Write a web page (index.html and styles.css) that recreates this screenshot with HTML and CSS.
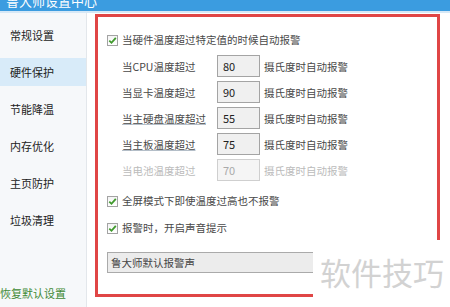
FILE: index.html
```html
<!DOCTYPE html>
<html>
  <head>
    <title>鲁大师设置中心</title>
    <link rel="stylesheet" href="styles.css">
  </head>
  <body>
    <div id="titlebar"><span class="title">鲁大师设置中心</span></div>
    <div id="main">
      <ul id="sidebar">
        <li>常规设置</li>
        <li class="active">硬件保护</li>
        <li>节能降温</li>
        <li>内存优化</li>
        <li>主页防护</li>
        <li>垃圾清理</li>
        <li class="restore">恢复默认设置</li>
      </ul>

      <div id="content">
        <div class="panel">
          <label class="check">
            <span class="box"><svg width="9" height="9" viewBox="0 0 9 9"><path d="M1.3 4.6 L3.5 6.8 L7.8 1.8" fill="none" stroke="#3f9a2c" stroke-width="1.8"/></svg></span>
            当硬件温度超过特定值的时候自动报警
          </label>

          <div class="temps">
            <div class="temp-row">
              <span class="name">当CPU温度超过</span>
              <span class="field">80</span>
              <span class="unit">摄氏度时自动报警</span>
            </div>
            <div class="temp-row">
              <span class="name">当显卡温度超过</span>
              <span class="field">90</span>
              <span class="unit">摄氏度时自动报警</span>
            </div>
            <div class="temp-row">
              <span class="name linked">当主硬盘温度超过</span>
              <span class="field">55</span>
              <span class="unit">摄氏度时自动报警</span>
            </div>
            <div class="temp-row">
              <span class="name linked">当主板温度超过</span>
              <span class="field">75</span>
              <span class="unit">摄氏度时自动报警</span>
            </div>
            <div class="temp-row disabled">
              <span class="name">当电池温度超过</span>
              <span class="field">70</span>
              <span class="unit">摄氏度时自动报警</span>
            </div>
          </div>

          <label class="check fullscreen">
            <span class="box"><svg width="9" height="9" viewBox="0 0 9 9"><path d="M1.3 4.6 L3.5 6.8 L7.8 1.8" fill="none" stroke="#3f9a2c" stroke-width="1.8"/></svg></span>
            全屏模式下即使温度过高也不报警
          </label>
          <label class="check sound">
            <span class="box"><svg width="9" height="9" viewBox="0 0 9 9"><path d="M1.3 4.6 L3.5 6.8 L7.8 1.8" fill="none" stroke="#3f9a2c" stroke-width="1.8"/></svg></span>
            报警时，开启声音提示
          </label>

          <div class="select">鲁大师默认报警声</div>
        </div>
      </div>
    </div>

    <div id="watermark">软件技巧</div>
  </body>
</html>
```

FILE: styles.css
```css
body {
  margin: 0;
  width: 450px;
  height: 307px;
  overflow: hidden;
  position: relative;
  background: #fff;
  font-family: "Noto Sans CJK SC", "Noto Sans", sans-serif;
  color: #333;
}

#titlebar {
  height: 11px;
  background: #3b9ce0;
  border-bottom: 2px solid #d6e8f6;
  overflow: hidden;
}

#titlebar .title {
  display: block;
  margin: -7px 0 0 6px;
  font-size: 13px;
  line-height: 16px;
  color: #fff;
}

#main {
  display: flex;
  height: 294px;
}

#sidebar {
  list-style-type: none;
  margin: 0;
  padding: 8px 0 0 0;
  width: 86px;
  background: #f6f8fa;
  border-right: 1px solid #e3e7eb;
  display: flex;
  flex-direction: column;
}

#sidebar li {
  height: 28px;
  line-height: 28px;
  margin-bottom: 9px;
  padding-left: 10px;
  font-size: 11px;
  color: #222;
}

#sidebar li.active {
  background: #d8ebf9;
}

#sidebar li.restore {
  margin-top: auto;
  margin-bottom: 0;
  height: 20px;
  line-height: 20px;
  padding: 0 0 4px 0;
  color: #3f8a35;
}

#content {
  flex: 1;
  padding: 1px 0 0 8px;
}

.panel {
  box-sizing: border-box;
  width: 345px;
  height: 283px;
  border: 3px solid #e04646;
  padding: 16px 0 0 9px;
  font-size: 10.5px;
  color: #484848;
}

.check {
  display: flex;
  align-items: center;
  gap: 4px;
  height: 14px;
  line-height: 14px;
}

.check .box {
  box-sizing: border-box;
  width: 11px;
  height: 11px;
  border: 1px solid #a3a3a3;
  background: linear-gradient(#f4f4f4, #fff);
  display: flex;
  align-items: center;
  justify-content: center;
}

.temps {
  margin: 8px 0 0 15px;
  display: flex;
  flex-direction: column;
  gap: 4px;
}

.temp-row {
  display: flex;
  align-items: center;
  height: 22px;
}

.temp-row .name {
  width: 95px;
}

.temp-row .linked {
  text-decoration: underline;
  text-decoration-color: #b4bec8;
}

.temp-row .field {
  box-sizing: border-box;
  width: 43px;
  height: 22px;
  line-height: 20px;
  border: 1px solid #a4a4a4;
  background: #f0f0f0;
  padding-left: 5px;
  font-size: 11px;
  color: #222;
}

.temp-row .unit {
  margin-left: 4px;
}

.temp-row.disabled {
  color: #bbb;
}

.temp-row.disabled .field {
  border-color: #cfcfcf;
  background: #f5f5f5;
  color: #aaa;
}

.fullscreen {
  margin-top: 13px;
}

.sound {
  margin-top: 13px;
}

.select {
  box-sizing: border-box;
  margin-top: 17px;
  width: 300px;
  height: 21px;
  line-height: 19px;
  border: 1px solid #aaa;
  background: #ececec;
  padding-left: 3px;
  color: #444;
}

/* watermark pasted over the corner */
#watermark {
  position: absolute;
  left: 313px;
  top: 240px;
  right: 0;
  bottom: 0;
  background: #fff;
  padding: 14px 0 0 7px;
  font-size: 31px;
  line-height: 36px;
  color: #d2d2d2;
}
```
